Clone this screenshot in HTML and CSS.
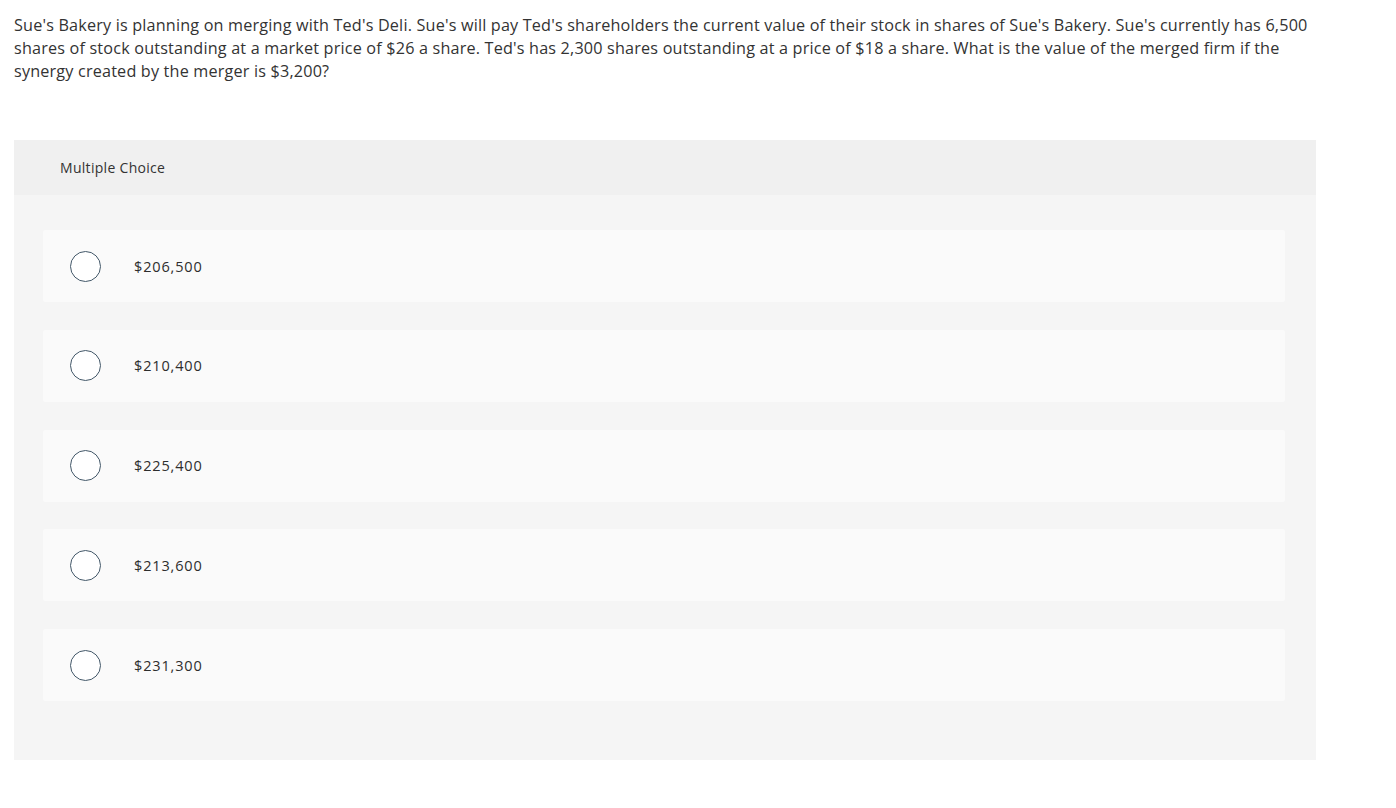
FILE: index.html
```html
<!DOCTYPE html>
<html>
<head>
<meta charset="utf-8">
<link rel="stylesheet" href="styles.css">
</head>
<body>
<div class="page">
  <p class="question">Sue's Bakery is planning on merging with Ted's Deli. Sue's will pay Ted's shareholders the current value of their stock in shares of Sue's Bakery. Sue's currently has 6,500 shares of stock outstanding at a market price of $26 a share. Ted's has 2,300 shares outstanding at a price of $18 a share. What is the value of the merged firm if the synergy created by the merger is $3,200?</p>
  <div class="panel">
    <div class="panel-head">Multiple Choice</div>
    <div class="options">
      <div class="option"><span class="radio"></span><span class="label">$206,500</span></div>
      <div class="option"><span class="radio"></span><span class="label">$210,400</span></div>
      <div class="option"><span class="radio"></span><span class="label">$225,400</span></div>
      <div class="option"><span class="radio"></span><span class="label">$213,600</span></div>
      <div class="option"><span class="radio"></span><span class="label">$231,300</span></div>
    </div>
  </div>
</div>
</body>
</html>
```
FILE: styles.css
```css
html, body {
  margin: 0;
  padding: 0;
  background: #ffffff;
}
body {
  font-family: "Open Sans", "Liberation Sans", sans-serif;
  color: #333333;
}
.page {
  padding: 14px 14px 0 14px;
  width: 1302px;
}
.question {
  margin: 0;
  font-size: 16.2px;
  letter-spacing: 0.18px;
  line-height: 23px;
  color: #333333;
  width: 1300px;
}
.panel {
  margin-top: 57px;
  width: 1302px;
  background: #f5f5f5;
}
.panel-head {
  height: 55px;
  background: #f0f0f0;
  padding-left: 46px;
  display: flex;
  align-items: center;
  font-size: 14px;
  letter-spacing: 0.3px;
  color: #333;
}
.options {
  padding: 35px 31px 59px 29px;
  display: flex;
  flex-direction: column;
  gap: 27.75px;
}
.option {
  height: 72px;
  background: #fafafa;
  display: flex;
  align-items: center;
  padding-left: 27px;
  border-radius: 2px;
}
.radio {
  box-sizing: border-box;
  width: 31px;
  height: 31px;
  border: 1.5px solid #435869;
  border-radius: 50%;
  background: #ffffff;
  flex: none;
}
.label {
  margin-left: 33px;
  font-size: 14.5px;
  letter-spacing: 0.85px;
  color: #2d2d2d;
}
```
